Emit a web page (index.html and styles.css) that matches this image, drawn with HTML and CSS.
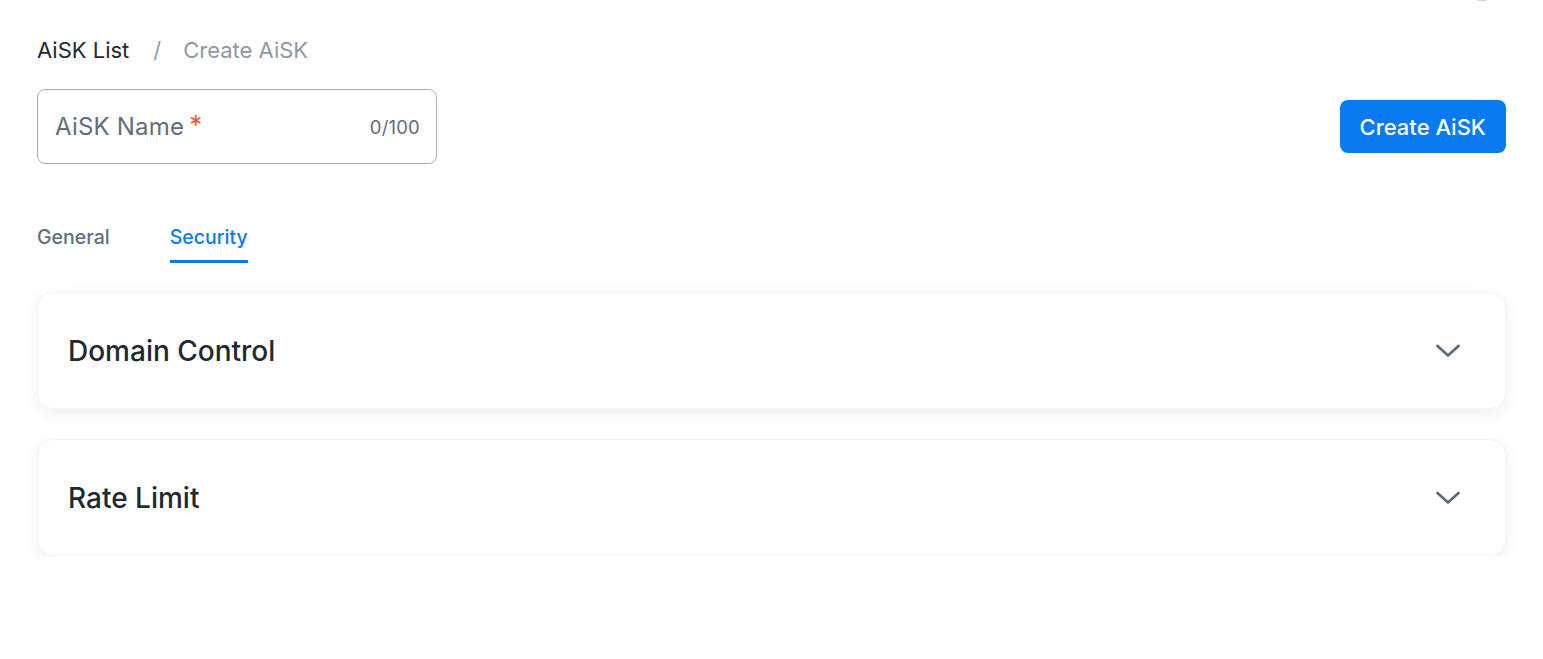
FILE: index.html
```html
<!DOCTYPE html>
<html lang="en">
<head>
<meta charset="utf-8">
<title>Create AiSK</title>
<link rel="stylesheet" href="styles.css">
</head>
<body>
<div class="avatar"></div>
<main class="page">
  <nav class="breadcrumb">
    <span class="crumb">AiSK List</span>
    <span class="sep">/</span>
    <span class="crumb current">Create AiSK</span>
  </nav>
  <div class="header-row">
    <label class="name-field">
      <span class="placeholder">AiSK Name<span class="req">*</span></span>
      <span class="counter">0/100</span>
    </label>
    <button class="primary-btn">Create AiSK</button>
  </div>
  <div class="tabs">
    <div class="tab">General</div>
    <div class="tab active">Security</div>
  </div>
  <div class="cards">
    <section class="card">
      <h2 class="card-title">Domain Control</h2>
      <svg class="chev" width="26" height="14" viewBox="0 0 26 14"><path d="M2.5 2 L13 11.5 L23.5 2" fill="none" stroke="#5d6b78" stroke-width="2.8" stroke-linecap="round" stroke-linejoin="round"/></svg>
    </section>
    <section class="card">
      <h2 class="card-title">Rate Limit</h2>
      <svg class="chev" width="26" height="14" viewBox="0 0 26 14"><path d="M2.5 2 L13 11.5 L23.5 2" fill="none" stroke="#5d6b78" stroke-width="2.8" stroke-linecap="round" stroke-linejoin="round"/></svg>
    </section>
  </div>
</main>
</body>
</html>
```
FILE: styles.css
```css
* { box-sizing: border-box; }
html, body { margin: 0; padding: 0; background: #ffffff; }
body {
  font-family: "Inter", "Noto Sans", "Liberation Sans", sans-serif;
  color: #1f2933;
  position: relative;
  overflow: hidden;
}
.avatar {
  position: absolute;
  top: -40px;
  left: 1462px;
  width: 40px;
  height: 41px;
  border-radius: 50%;
  background: #c9ced6;
}
.page {
  padding: 36px 37px 0 37px;
}
.breadcrumb {
  display: flex;
  align-items: center;
  height: 28px;
  font-size: 22px;
  line-height: 28px;
}
.crumb { color: #1f2933; }
.sep { color: #8e99a5; margin: 0 22px 0 24px; }
.crumb.current { color: #8e99a5; }
.header-row {
  margin-top: 25px;
  display: flex;
  align-items: center;
  justify-content: space-between;
}
.name-field {
  width: 400px;
  height: 75px;
  border: 1px solid #a3adb7;
  border-radius: 8px;
  display: flex;
  align-items: center;
  justify-content: space-between;
  padding: 0 16px 0 17px;
}
.placeholder {
  font-size: 24px;
  color: #5f6e7c;
  display: flex;
  align-items: center;
  letter-spacing: 0.2px;
}
.req {
  color: #f0563c;
  font-size: 26px;
  margin-left: 5px;
  line-height: 1;
  transform: translateY(-2px);
}
.counter {
  font-size: 18.5px;
  color: #5f6b78;
  letter-spacing: 0.2px;
}
.primary-btn {
  height: 53px;
  padding: 0 20px;
  border: none;
  border-radius: 8px;
  background: #0a7af0;
  color: #ffffff;
  font-family: inherit;
  font-size: 22px;
  font-weight: 500;
  cursor: pointer;
}
.tabs {
  margin-top: 61px;
  display: flex;
  gap: 60px;
}
.tab {
  font-size: 19.5px;
  line-height: 24px;
  font-weight: 500;
  color: #5f6e7c;
  padding-bottom: 11px;
  border-bottom: 3px solid transparent;
}
.tab.active {
  color: #0a7af0;
  border-bottom-color: #0a7af0;
}
.cards {
  margin-top: 29px;
  display: flex;
  flex-direction: column;
  gap: 30px;
}
.card {
  height: 117px;
  border-radius: 16px;
  background: #ffffff;
  border: 1px solid #f4f5f7;
  box-shadow: 0 5px 16px rgba(30, 45, 70, 0.07);
  display: flex;
  align-items: center;
  justify-content: space-between;
  padding: 0 44px 0 30px;
}
.card-title {
  margin: 0;
  font-size: 28px;
  font-weight: 500;
  color: #1f2933;
}
.chev { display: block; }
```
